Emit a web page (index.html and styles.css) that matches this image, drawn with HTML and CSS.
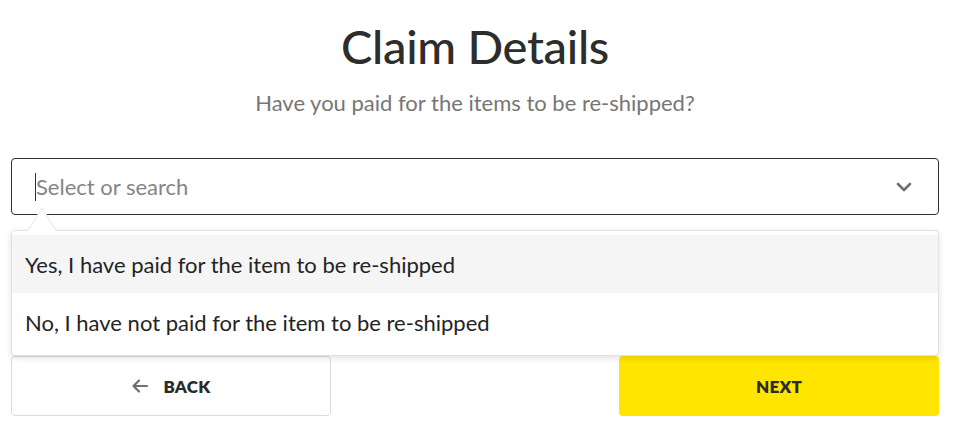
FILE: index.html
```html
<!DOCTYPE html>
<html>
<head>
<meta charset="utf-8">
<link rel="stylesheet" href="styles.css">
</head>
<body>
<main class="page">
  <h1 class="title">Claim Details</h1>
  <p class="subtitle">Have you paid for the items to be re-shipped?</p>
  <div class="field">
    <div class="select">
      <span class="caret"></span>
      <span class="placeholder">Select or search</span>
      <svg class="chevron" width="16" height="10" viewBox="0 0 16 10"><path d="M2 2l6 6 6-6" fill="none" stroke="#6f6f6f" stroke-width="2.6" stroke-linecap="round" stroke-linejoin="round"/></svg>
    </div>
    <div class="menu">
      <span class="pointer"></span>
      <div class="option active">Yes, I have paid for the item to be re-shipped</div>
      <div class="option">No, I have not paid for the item to be re-shipped</div>
    </div>
  </div>
  <div class="actions">
    <button class="btn back"><svg width="18" height="16" viewBox="0 0 18 16"><path d="M16 8H3M8 2.5L2.5 8 8 13.5" fill="none" stroke="#6f6f6f" stroke-width="2.2" stroke-linecap="round" stroke-linejoin="round"/></svg><span>BACK</span></button>
    <button class="btn next">NEXT</button>
  </div>
</main>
</body>
</html>
```
FILE: styles.css
```css
* { box-sizing: border-box; }
html, body { margin: 0; padding: 0; background: #fff; }
body { font-family: Lato, "Noto Sans", sans-serif; color: #2b2b2b; }
.page { width: 928px; margin-left: 11px; padding-top: 14px; }
.title { margin: 0; text-align: center; font-size: 47px; font-weight: 500; line-height: 64px; color: #2d2d2d; letter-spacing: -0.3px; }
.subtitle { margin: 10px 0 0; text-align: center; font-size: 22px; line-height: 30px; color: #767676; }
.field { position: relative; margin-top: 40px; }
.select { height: 57px; border: 1px solid #2f2f2f; border-radius: 4px; display: flex; align-items: center; padding-left: 23px; padding-right: 26px; }
.caret { width: 1px; height: 28px; background: #333; margin-right: 0; }
.placeholder { flex: 1; font-size: 22px; color: #858585; }
.chevron { display: block; }
.menu { position: absolute; left: 0; right: 0; top: 72px; background: #fff; border: 1px solid #e2e2e2; border-radius: 4px; padding: 4px 0; box-shadow: 0 2px 6px rgba(0,0,0,0.12); z-index: 2; }
.pointer { position: absolute; left: 15px; top: -24px; width: 0; height: 0; border-left: 15px solid transparent; border-right: 15px solid transparent; border-bottom: 24px solid #ececec; }
.pointer::after { content: ""; position: absolute; left: -14px; top: 2px; border-left: 14px solid transparent; border-right: 14px solid transparent; border-bottom: 23px solid #fff; }
.option { height: 58px; display: flex; align-items: center; padding-left: 13px; font-size: 22px; color: #242424; }
.option.active { background: #f5f5f5; }
.actions { display: flex; justify-content: space-between; margin-top: 141px; }
.btn { width: 320px; height: 60px; border-radius: 4px; font-family: inherit; font-size: 17px; font-weight: 800; letter-spacing: 0.3px; color: #2b2b2b; display: flex; align-items: center; justify-content: center; gap: 14px; cursor: pointer; }
.back { background: #fff; border: 1px solid #dcdcdc; }
.next { background: #ffe500; border: none; }
```
